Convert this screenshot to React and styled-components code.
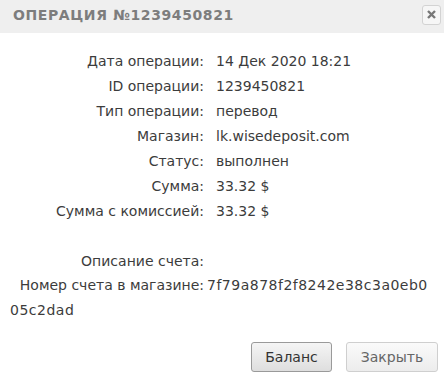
import React from "react";
import styled, { createGlobalStyle } from "styled-components";

const GlobalStyle = createGlobalStyle`
  html, body {
    margin: 0;
    padding: 0;
    background: #fff;
  }
`;

const Dialog = styled.section`
  width: 444px;
  height: 378px;
  background: #fff;
  font-family: "DejaVu Sans", "Noto Sans", sans-serif;
  color: #3c3c3c;
  display: flex;
  flex-direction: column;
`;

const Header = styled.header`
  height: 33px;
  background: #efefef;
  display: flex;
  align-items: center;
  justify-content: space-between;
  padding: 0 3px 4px 13px;
  box-sizing: border-box;
`;

const Title = styled.h1`
  margin: 0;
  font-size: 14px;
  font-weight: bold;
  letter-spacing: 0.6px;
  color: #7d7d7d;
  text-transform: uppercase;
`;

const CloseButton = styled.button`
  width: 19px;
  height: 20px;
  padding: 0;
  border: 1px solid #d3d3d3;
  border-radius: 3px;
  background: #f6f6f6;
  display: flex;
  align-items: center;
  justify-content: center;
`;

const Body = styled.div`
  flex: 1;
  padding: 15px 10px 0 0;
`;

const Table = styled.div`
  display: grid;
  grid-template-columns: 204px 1fr;
  grid-auto-rows: 25px;
  align-items: center;
  font-size: 14px;
`;

const Label = styled.div`
  text-align: right;
  white-space: nowrap;
`;

const Value = styled.div`
  padding-left: 12px;
  white-space: nowrap;
`;

const Spacer = styled.div`
  grid-column: 1 / -1;
`;

const Extra = styled.div`
  font-size: 14px;
  line-height: 25px;
  padding-left: 10px;
`;

const ExtraLabel = styled.span`
  display: inline-block;
  width: 194px;
  text-align: right;
`;

const Hash = styled.span`
  padding-left: 3px;
  letter-spacing: 0.5px;
  word-break: break-all;
`;

const Footer = styled.footer`
  display: flex;
  justify-content: flex-end;
  gap: 14px;
  padding: 0 6px 6px 0;
`;

const Button = styled.button`
  height: 30px;
  min-width: ${(p) => p.$w}px;
  border-radius: 3px;
  font-family: "DejaVu Sans", sans-serif;
  font-size: 14px;
  padding: 0 12px;
  color: ${(p) => (p.$primary ? "#333" : "#666")};
  border: 1px solid ${(p) => (p.$primary ? "#9a9a9a" : "#cfcfcf")};
  background: ${(p) =>
    p.$primary
      ? "linear-gradient(#f5f5f5, #dedede)"
      : "linear-gradient(#fafafa, #ececec)"};
`;

const rows = [
  ["Дата операции:", "14 Дек 2020 18:21"],
  ["ID операции:", "1239450821"],
  ["Тип операции:", "перевод"],
  ["Магазин:", "lk.wisedeposit.com"],
  ["Статус:", "выполнен"],
  ["Сумма:", "33.32 $"],
  ["Сумма с комиссией:", "33.32 $"],
];

export default function App() {
  return (
    <Dialog>
      <GlobalStyle />
      <Header>
        <Title>Операция №1239450821</Title>
        <CloseButton aria-label="close">
          <svg width="9" height="9" viewBox="0 0 9 9">
            <path d="M1 1 L8 8 M8 1 L1 8" stroke="#777" strokeWidth="2.4" />
          </svg>
        </CloseButton>
      </Header>
      <Body>
        <Table>
          {rows.map(([l, v]) => (
            <React.Fragment key={l}>
              <Label>{l}</Label>
              <Value>{v}</Value>
            </React.Fragment>
          ))}
          <Spacer />
          <Label>Описание счета:</Label>
          <Value />
        </Table>
        <Extra>
          <ExtraLabel>Номер счета в магазине:</ExtraLabel>
          <Hash>7f79a878f2f8242e38c3a0eb005c2dad</Hash>
        </Extra>
      </Body>
      <Footer>
        <Button $primary $w={81}>Баланс</Button>
        <Button $w={92}>Закрыть</Button>
      </Footer>
    </Dialog>
  );
}
